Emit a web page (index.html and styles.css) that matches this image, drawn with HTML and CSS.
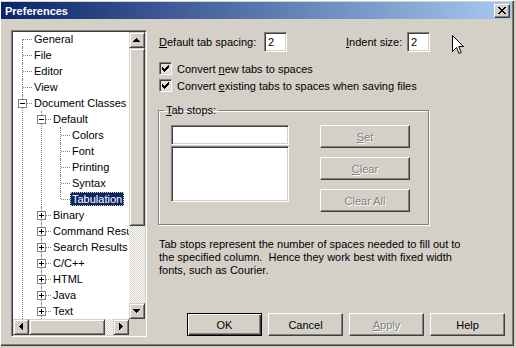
FILE: index.html
```html
<!DOCTYPE html>
<html lang="en">

<head>
    <meta charset="UTF-8">
    <title>Preferences</title>
    <link rel="stylesheet" href="styles.css">
</head>

<body>

    <div class="window">
        <div class="titlebar">
            <span class="title">Preferences</span>
            <button class="close-btn">
                <svg width="8" height="7" viewBox="0 0 8 7" shape-rendering="crispEdges">
                    <path d="M0 0h2v1H0zM6 0h2v1H6zM1 1h2v1H1zM5 1h2v1H5zM2 2h4v1H2zM3 3h2v1H3zM2 4h4v1H2zM1 5h2v1H1zM5 5h2v1H5zM0 6h2v1H0zM6 6h2v1H6z" fill="#000"/>
                </svg>
            </button>
        </div>

        <div class="dialog">
            <!-- category tree -->
            <div class="treeview">
                <div class="tree-content">
                    <ul class="tree">
                        <li><div class="node"><span class="label">General</span></div></li>
                        <li><div class="node"><span class="label">File</span></div></li>
                        <li><div class="node"><span class="label">Editor</span></div></li>
                        <li><div class="node"><span class="label">View</span></div></li>
                        <li>
                            <div class="node"><span class="exp"></span><span class="label">Document Classes</span></div>
                            <ul>
                                <li>
                                    <div class="node"><span class="exp"></span><span class="label">Default</span></div>
                                    <ul>
                                        <li><div class="node"><span class="label">Colors</span></div></li>
                                        <li><div class="node"><span class="label">Font</span></div></li>
                                        <li><div class="node"><span class="label">Printing</span></div></li>
                                        <li><div class="node"><span class="label">Syntax</span></div></li>
                                        <li class="last"><div class="node"><span class="label selected">Tabulation</span></div></li>
                                    </ul>
                                </li>
                                <li><div class="node"><span class="exp plus"></span><span class="label">Binary</span></div></li>
                                <li><div class="node"><span class="exp plus"></span><span class="label">Command Results</span></div></li>
                                <li><div class="node"><span class="exp plus"></span><span class="label">Search Results</span></div></li>
                                <li><div class="node"><span class="exp plus"></span><span class="label">C/C++</span></div></li>
                                <li><div class="node"><span class="exp plus"></span><span class="label">HTML</span></div></li>
                                <li><div class="node"><span class="exp plus"></span><span class="label">Java</span></div></li>
                                <li><div class="node"><span class="exp plus"></span><span class="label">Text</span></div></li>
                            </ul>
                        </li>
                    </ul>
                </div>

                <div class="vscroll">
                    <div class="sb-btn">
                        <svg width="14" height="14" viewBox="1 1 14 14" shape-rendering="crispEdges"><path d="M7 6h1v1h1v1h1v1h1v1H4V9h1V8h1V7h1z"/></svg>
                    </div>
                    <div class="sb-thumb v"></div>
                    <div class="sb-track"></div>
                    <div class="sb-btn">
                        <svg width="14" height="14" viewBox="1 1 14 14" shape-rendering="crispEdges"><path d="M4 6h7v1h-1v1H9v1H8v1H7V9H6V8H5V7H4z"/></svg>
                    </div>
                </div>

                <div class="hscroll">
                    <div class="sb-btn">
                        <svg width="14" height="14" viewBox="1 1 14 14" shape-rendering="crispEdges"><path d="M6 7h1V6h1V5h1V4h1v7H9v-1H8V9H7V8H6z"/></svg>
                    </div>
                    <div class="sb-thumb h"></div>
                    <div class="sb-track"></div>
                    <div class="sb-btn">
                        <svg width="14" height="14" viewBox="1 1 14 14" shape-rendering="crispEdges"><path d="M6 4h1v1h1v1h1v1h1v1H9v1H8v1H7v1H6z"/></svg>
                    </div>
                </div>

                <div class="sb-corner"></div>
            </div>

            <!-- tabulation settings -->
            <div class="settings">
                <div class="field-row">
                    <label class="lbl-spacing"><u>D</u>efault tab spacing:</label>
                    <input class="edit num" type="text" value="2">
                    <label class="lbl-indent"><u>I</u>ndent size:</label>
                    <input class="edit num" type="text" value="2">
                </div>

                <div class="check-row first">
                    <span class="checkbox">
                        <svg width="11" height="11" viewBox="1 1 11 11" shape-rendering="crispEdges"><path d="M3 5h1v3H3zM4 6h1v3H4zM5 7h1v3H5zM6 6h1v3H6zM7 5h1v3H7zM8 4h1v3H8zM9 3h1v3H9z"/></svg>
                    </span>
                    <span>Convert <u>n</u>ew tabs to spaces</span>
                </div>
                <div class="check-row">
                    <span class="checkbox">
                        <svg width="11" height="11" viewBox="1 1 11 11" shape-rendering="crispEdges"><path d="M3 5h1v3H3zM4 6h1v3H4zM5 7h1v3H5zM6 6h1v3H6zM7 5h1v3H7zM8 4h1v3H8zM9 3h1v3H9z"/></svg>
                    </span>
                    <span>Convert <u>e</u>xisting tabs to spaces when saving files</span>
                </div>

                <fieldset class="group">
                    <legend><u>T</u>ab stops:</legend>
                    <div class="group-body">
                        <div class="stops">
                            <input class="edit stop-input" type="text" value="">
                            <div class="listbox"></div>
                        </div>
                        <div class="stop-buttons">
                            <button class="btn wide" disabled><u>S</u>et</button>
                            <button class="btn wide" disabled><u>C</u>lear</button>
                            <button class="btn wide" disabled>Clear All</button>
                        </div>
                    </div>
                </fieldset>

                <p class="help">Tab stops represent the number of spaces needed to fill out to<br>
                    the specified column.&nbsp; Hence they work best with fixed width<br>
                    fonts, such as Courier.</p>

                <div class="actions">
                    <button class="btn default">OK</button>
                    <button class="btn">Cancel</button>
                    <button class="btn" disabled><u>A</u>pply</button>
                    <button class="btn">Help</button>
                </div>
            </div>
        </div>

        <svg class="pointer" width="13" height="20" viewBox="0 0 13 20">
            <path d="M0.5 0.5V16.5L4.5 12.5L7 18.5L9.2 17.5L6.8 11.5H11.5Z" fill="#fff" stroke="#000" stroke-width="1" stroke-linejoin="miter"/>
        </svg>
    </div>

</body>

</html>
```

FILE: styles.css
```css
:root {
    --face: #d4d0c8;
    --shadow: #808080;
    --dark: #404040;
    --hilite: #ffffff;
}

body {
    margin: 0;
    background: var(--face);
    font-family: "Liberation Sans", Arial, sans-serif;
    font-size: 11px;
    color: #000;
}

.window {
    position: relative;
    width: 514px;
    height: 346px;
    box-sizing: border-box;
    padding: 2px 2px 0 1px;
    display: flex;
    flex-direction: column;
    box-shadow: inset 1px 1px var(--hilite), inset -1px -1px var(--dark), inset -2px -2px var(--shadow);
}

.titlebar {
    height: 17px;
    flex: none;
    display: flex;
    align-items: center;
    justify-content: space-between;
    padding: 0 2px 0 4px;
    background: linear-gradient(to right, #0a246a, #a6caf0);
}

.title {
    color: #fff;
    font-weight: bold;
}

.close-btn {
    width: 16px;
    height: 14px;
    padding: 0;
    display: flex;
    align-items: center;
    justify-content: center;
    background: var(--face);
    border: 1px solid;
    border-color: var(--hilite) var(--dark) var(--dark) var(--hilite);
    box-shadow: inset -1px -1px var(--shadow);
}

.close-btn svg {
    display: block;
}

.dialog {
    flex: 1;
    display: flex;
    align-items: flex-start;
    padding-left: 10px;
}

/* tree view */
.treeview {
    margin-top: 11px;
    width: 136px;
    height: 307px;
    box-sizing: border-box;
    padding: 1px;
    display: grid;
    grid-template-columns: 1fr 16px;
    grid-template-rows: 1fr 16px;
    background: #fff;
    border: 1px solid;
    border-color: var(--shadow) var(--hilite) var(--hilite) var(--shadow);
    box-shadow: inset 1px 1px var(--dark), inset -1px -1px var(--face);
}

.tree-content {
    overflow: hidden;
    background: #fff;
}

.tree,
.tree ul {
    list-style: none;
    margin: 0;
    padding: 0;
}

.tree {
    margin-top: -1px;
}

.tree ul {
    padding-left: 19px;
}

.tree li {
    position: relative;
}

/* the tree continues below the visible rows, so only marked items end their line */
.tree li::before {
    content: "";
    position: absolute;
    left: 9px;
    top: 0;
    bottom: 0;
    border-left: 1px dotted var(--shadow);
}

.tree li.last::before {
    bottom: auto;
    height: 8px;
}

.tree > li:first-child::before {
    top: 8px;
}

.node {
    position: relative;
    height: 16px;
    line-height: 16px;
    padding-left: 21px;
    white-space: nowrap;
}

.node::before {
    content: "";
    position: absolute;
    left: 10px;
    top: 8px;
    width: 9px;
    border-top: 1px dotted var(--shadow);
}

.exp {
    position: absolute;
    left: 5px;
    top: 4px;
    width: 9px;
    height: 9px;
    box-sizing: border-box;
    border: 1px solid var(--shadow);
    background: #fff;
    z-index: 1;
}

.exp::before {
    content: "";
    position: absolute;
    left: 1px;
    top: 3px;
    width: 5px;
    height: 1px;
    background: #000;
}

.exp.plus::after {
    content: "";
    position: absolute;
    left: 3px;
    top: 1px;
    width: 1px;
    height: 5px;
    background: #000;
}

.label {
    padding: 0 2px;
    margin-left: -2px;
}

.label.selected {
    display: inline-block;
    line-height: 14px;
    background: #0a246a;
    color: #fff;
    outline: 1px dotted #e8d48e;
    outline-offset: -1px;
}

/* scroll bars */
.vscroll {
    display: flex;
    flex-direction: column;
}

.hscroll {
    display: flex;
}

.sb-btn,
.sb-thumb {
    flex: none;
    box-sizing: border-box;
    background: var(--face);
    border: 1px solid;
    border-color: var(--face) var(--dark) var(--dark) var(--face);
    box-shadow: inset 1px 1px var(--hilite), inset -1px -1px var(--shadow);
}

.sb-btn {
    width: 16px;
    height: 16px;
}

.sb-btn svg {
    display: block;
}

.sb-thumb.v {
    height: 178px;
}

.sb-thumb.h {
    width: 76px;
}

.sb-track {
    flex: 1;
    background: repeating-conic-gradient(var(--face) 0 25%, #fff 0 50%) 0 0 / 2px 2px;
}

.sb-corner {
    background: var(--face);
}

/* settings panel */
.settings {
    width: 346px;
    margin-left: 12px;
    padding-top: 13px;
    display: flex;
    flex-direction: column;
}

.field-row {
    display: flex;
    align-items: center;
    height: 20px;
}

.lbl-spacing {
    width: 105px;
}

.lbl-indent {
    width: 61px;
    margin-left: 59px;
}

.edit {
    box-sizing: border-box;
    height: 20px;
    margin: 0;
    padding: 0 3px;
    font: inherit;
    color: #000;
    background: #fff;
    outline: none;
    border: 1px solid;
    border-color: var(--shadow) var(--hilite) var(--hilite) var(--shadow);
    box-shadow: inset 1px 1px var(--dark), inset -1px -1px var(--face);
}

.edit.num {
    width: 23px;
}

.check-row {
    display: flex;
    align-items: center;
    height: 17px;
}

.check-row.first {
    margin-top: 8px;
}

.checkbox {
    flex: none;
    width: 13px;
    height: 13px;
    box-sizing: border-box;
    margin-right: 5px;
    background: #e6e4de;
    border: 1px solid;
    border-color: var(--shadow) var(--hilite) var(--hilite) var(--shadow);
    box-shadow: inset 1px 1px var(--dark), inset -1px -1px var(--face);
}

.checkbox svg {
    display: block;
}

.group {
    width: 271px;
    box-sizing: border-box;
    margin: 10px 0 0 -1px;
    padding: 8px 0 12px 5px;
    border: 1px solid var(--shadow);
    box-shadow: inset 1px 1px var(--hilite), 1px 1px var(--hilite);
}

.group legend {
    padding: 0 2px;
    line-height: 13px;
}

.group-body {
    display: flex;
    margin-left: 7px;
}

.stops {
    width: 118px;
    display: flex;
    flex-direction: column;
}

.stop-input {
    width: 118px;
}

.listbox {
    height: 56px;
    margin-top: 1px;
    box-sizing: border-box;
    background: #fff;
    border: 1px solid;
    border-color: var(--shadow) var(--hilite) var(--hilite) var(--shadow);
    box-shadow: inset 1px 1px var(--dark), inset -1px -1px var(--face);
}

.stop-buttons {
    margin-left: 31px;
    display: flex;
    flex-direction: column;
    gap: 9px;
}

.btn {
    width: 75px;
    height: 23px;
    padding: 0;
    font: inherit;
    color: #000;
    background: var(--face);
    border: 1px solid;
    border-color: var(--hilite) var(--dark) var(--dark) var(--hilite);
    box-shadow: inset -1px -1px var(--shadow);
}

.btn.wide {
    width: 90px;
}

.btn.default {
    border-color: #000;
    box-shadow: inset 1px 1px var(--hilite), inset -1px -1px var(--dark), inset -2px -2px var(--shadow);
}

.btn:disabled {
    color: var(--shadow);
    text-shadow: 1px 1px var(--hilite);
}

.help {
    margin: 13px 0 0;
    line-height: 13px;
}

.actions {
    margin-top: 36px;
    display: flex;
    justify-content: flex-end;
    gap: 6px;
}

.pointer {
    position: absolute;
    left: 452px;
    top: 35px;
}
```
